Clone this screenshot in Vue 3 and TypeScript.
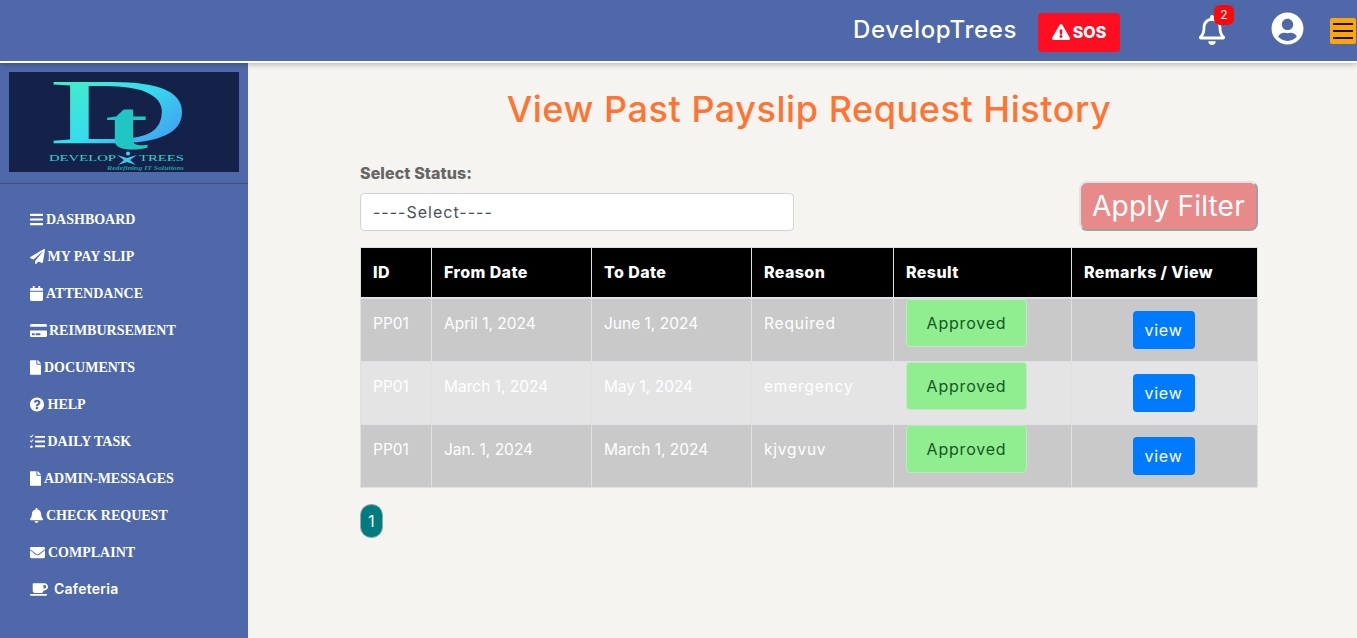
<template>
  <div class="app">
    <header class="topbar">
      <span class="brand">DevelopTrees</span>
      <button class="sos">
        <svg class="sos-icon" viewBox="0 0 576 512"><path :d="icons.warning" /></svg>
        <span>SOS</span>
      </button>
      <div class="bell">
        <svg viewBox="0 0 448 512"><path :d="icons.bellOutline" /></svg>
        <span class="badge">2</span>
      </div>
      <svg class="user" viewBox="0 0 496 512"><path :d="icons.user" /></svg>
      <button class="burger"><i></i><i></i><i></i></button>
    </header>

    <div class="body">
      <aside class="sidebar">
        <div class="logo-wrap">
          <svg class="logo" viewBox="0 0 230 100">
            <defs>
              <linearGradient id="dGrad" x1="0" y1="0" x2="1" y2="1">
                <stop offset="0" stop-color="#4cf5b4" />
                <stop offset="0.5" stop-color="#35dcee" />
                <stop offset="1" stop-color="#4a7ff2" />
              </linearGradient>
            </defs>
            <rect width="230" height="100" fill="#142148" />
            <text transform="translate(39,71) scale(2.09,1)" class="logo-d" fill="url(#dGrad)">D</text>
            <text transform="translate(96,77) scale(1.85,1)" class="logo-t">t</text>
            <text x="40" y="89" class="logo-name" textLength="67" lengthAdjust="spacingAndGlyphs">DEVELOP</text>
            <text x="130" y="89" class="logo-name" textLength="45" lengthAdjust="spacingAndGlyphs">TREES</text>
            <circle cx="119" cy="81.5" r="2" fill="#3fd6ec" />
            <path d="M108 83l10 3 10-3-7 5 6 5-9-3-9 3 6-5z" fill="#3fc8e8" />
            <text x="98" y="98" class="logo-tag" textLength="77" lengthAdjust="spacingAndGlyphs">Redefining IT Solutions</text>
          </svg>
        </div>
        <nav class="menu">
          <a v-for="item in menu" :key="item.label" class="menu-item" :class="{ alt: item.alt }">
            <svg :viewBox="item.box" :style="{ width: item.w + 'px' }"><path :d="item.path" /></svg>
            <span :style="{ marginLeft: item.gap + 'px' }">{{ item.label }}</span>
          </a>
        </nav>
      </aside>

      <main class="content">
        <h1 class="title">View Past Payslip Request History</h1>

        <div class="filter">
          <div class="field">
            <label class="field-label" for="status">Select Status:</label>
            <select id="status" class="select">
              <option>----Select----</option>
            </select>
          </div>
          <button class="apply">Apply Filter</button>
        </div>

        <table class="table">
          <colgroup>
            <col v-for="w in colWidths" :key="w" :style="{ width: w + 'px' }" />
          </colgroup>
          <thead>
            <tr>
              <th>ID</th>
              <th>From Date</th>
              <th>To Date</th>
              <th>Reason</th>
              <th>Result</th>
              <th>Remarks / View</th>
            </tr>
          </thead>
          <tbody>
            <tr v-for="row in rows" :key="row.from">
              <td>{{ row.id }}</td>
              <td>{{ row.from }}</td>
              <td>{{ row.to }}</td>
              <td class="reason">{{ row.reason }}</td>
              <td class="result"><div class="approved">Approved</div></td>
              <td class="action"><button class="view">view</button></td>
            </tr>
          </tbody>
        </table>

        <button class="page">1</button>
      </main>
    </div>
  </div>
</template>

<script setup lang="ts">
const icons = {
  warning:
    'M569.517 440.013C587.975 472.007 564.806 512 527.94 512H48.054c-36.937 0-59.999-40.055-41.577-71.987L246.423 24.035c18.467-32.009 64.72-31.951 83.154 0l239.94 416.013zM288 354c-25.405 0-46 20.595-46 46s20.595 46 46 46 46-20.595 46-46-20.595-46-46-46zm-43.673-165.346l7.418 136c.347 6.364 5.609 11.346 11.982 11.346h48.546c6.373 0 11.635-4.982 11.982-11.346l7.418-136c.375-6.874-5.098-12.654-11.982-12.654h-63.383c-6.884 0-12.356 5.78-11.981 12.654z',
  bellOutline:
    'M439.39 362.29c-19.32-20.76-55.47-51.99-55.47-154.29 0-77.7-54.48-139.9-127.94-155.16V32c0-17.67-14.32-32-31.98-32s-31.98 14.33-31.98 32v20.84C118.56 68.1 64.08 130.3 64.08 208c0 102.3-36.15 133.53-55.47 154.29-6 6.45-8.66 14.16-8.61 21.71.11 16.4 12.98 32 32.1 32h383.8c19.12 0 32-15.6 32.1-32 .05-7.55-2.61-15.27-8.61-21.71zM67.53 368c21.22-27.97 44.42-74.33 44.53-159.42 0-.2-.06-.38-.06-.58 0-61.86 50.14-112 112-112s112 50.14 112 112c0 .2-.06.38-.06.58.11 85.1 23.31 131.46 44.53 159.42H67.53zM224 512c35.32 0 63.97-28.65 63.97-64H160.03c0 35.35 28.65 64 63.97 64z',
  user:
    'M248 8C111 8 0 119 0 256s111 248 248 248 248-111 248-248S385 8 248 8zm0 96c48.6 0 88 39.4 88 88s-39.4 88-88 88-88-39.4-88-88 39.4-88 88-88zm0 344c-58.7 0-111.3-26.6-146.5-68.2 18.8-35.4 55.6-59.8 98.5-59.8 2.4 0 4.8.4 7.1 1.1 13 4.2 26.6 6.9 40.9 6.9 14.3 0 28-2.7 40.9-6.9 2.3-.7 4.7-1.1 7.1-1.1 42.9 0 79.7 24.4 98.5 59.8C359.3 421.4 306.7 448 248 448z'
}

const file =
  'M224 136V0H24C10.7 0 0 10.7 0 24v464c0 13.3 10.7 24 24 24h336c13.3 0 24-10.7 24-24V160H248c-13.2 0-24-10.8-24-24zm160-14.1v6.1H256V0h6.1c6.4 0 12.5 2.5 17 7l97.9 98c4.5 4.5 7 10.6 7 16.9z'

const menu = [
  {
    label: 'DASHBOARD',
    box: '0 0 448 512',
    w: 13,
    gap: 3,
    path: 'M16 132h416c8.837 0 16-7.163 16-16V76c0-8.837-7.163-16-16-16H16C7.163 60 0 67.163 0 76v40c0 8.837 7.163 16 16 16zm0 160h416c8.837 0 16-7.163 16-16v-40c0-8.837-7.163-16-16-16H16c-8.837 0-16 7.163-16 16v40c0 8.837 7.163 16 16 16zm0 160h416c8.837 0 16-7.163 16-16v-40c0-8.837-7.163-16-16-16H16c-8.837 0-16 7.163-16 16v40c0 8.837 7.163 16 16 16z'
  },
  {
    label: 'MY PAY SLIP',
    box: '0 0 512 512',
    w: 15,
    gap: 2.5,
    path: 'M476 3.2L12.5 270.6c-18.1 10.4-15.8 35.6 2.2 43.2L121 358.4l287.3-253.2c5.5-4.9 13.3 2.6 8.6 8.3L176 407v80.5c0 23.6 28.5 32.9 42.5 15.8L282 426l124.6 52.2c14.2 6 30.4-2.9 33-18.2l72-432C515 7.8 493.3-6.8 476 3.2z'
  },
  {
    label: 'ATTENDANCE',
    box: '0 0 448 512',
    w: 13,
    gap: 3,
    path: 'M12 192h424c6.6 0 12 5.4 12 12v260c0 26.5-21.5 48-48 48H48c-26.5 0-48-21.5-48-48V204c0-6.6 5.4-12 12-12zm436-44v-36c0-26.5-21.5-48-48-48h-48V12c0-6.6-5.4-12-12-12h-40c-6.6 0-12 5.4-12 12v52H160V12c0-6.6-5.4-12-12-12h-40c-6.6 0-12 5.4-12 12v52H48C21.5 64 0 85.5 0 112v36c0 6.6 5.4 12 12 12h424c6.6 0 12-5.4 12-12z'
  },
  {
    label: 'REIMBURSEMENT',
    box: '0 0 576 512',
    w: 17,
    gap: 2,
    path: 'M0 432c0 26.5 21.5 48 48 48h480c26.5 0 48-21.5 48-48V256H0v176zm192-68c0-6.6 5.4-12 12-12h136c6.6 0 12 5.4 12 12v40c0 6.6-5.4 12-12 12H204c-6.6 0-12-5.4-12-12v-40zm-128 0c0-6.6 5.4-12 12-12h72c6.6 0 12 5.4 12 12v40c0 6.6-5.4 12-12 12H76c-6.6 0-12-5.4-12-12v-40zM576 80v48H0V80c0-26.5 21.5-48 48-48h480c26.5 0 48 21.5 48 48z'
  },
  { label: 'DOCUMENTS', box: '0 0 384 512', w: 11, gap: 3, path: file },
  {
    label: 'HELP',
    box: '8 8 496 496',
    w: 14,
    gap: 3.5,
    path: 'M504 256c0 136.997-111.043 248-248 248S8 392.997 8 256C8 119.083 119.043 8 256 8s248 111.083 248 248zM262.655 90c-54.497 0-89.255 22.957-116.549 63.758-3.536 5.286-2.353 12.415 2.715 16.258l34.699 26.31c5.205 3.947 12.621 3.008 16.665-2.122 17.864-22.658 30.113-35.797 57.303-35.797 20.429 0 45.698 13.148 45.698 32.958 0 14.976-12.363 22.667-32.534 33.976C247.128 238.528 216 254.941 216 296v4c0 6.627 5.373 12 12 12h56c6.627 0 12-5.373 12-12v-1.333c0-28.462 83.186-29.647 83.186-106.667 0-58.002-60.165-102-116.531-102zM256 338c-25.365 0-46 20.635-46 46 0 25.364 20.635 46 46 46s46-20.636 46-46c0-25.365-20.635-46-46-46z'
  },
  {
    label: 'DAILY TASK',
    box: '0 0 512 512',
    w: 15,
    gap: 2.5,
    path: 'M20 50l25 25 55-60 25 22-80 90-48-48zM20 210l25 25 55-60 25 22-80 90-48-48zM48 392a44 44 0 1 0 .1 0zM176 64h336v64H176zM176 224h336v64H176zM176 384h336v64H176z'
  },
  { label: 'ADMIN-MESSAGES', box: '0 0 384 512', w: 11, gap: 3, path: file },
  {
    label: 'CHECK REQUEST',
    box: '0 0 448 512',
    w: 13,
    gap: 3,
    path: 'M224 512c35.32 0 63.97-28.65 63.97-64H160.03c0 35.35 28.65 64 63.97 64zm215.39-149.71c-19.32-20.76-55.47-51.99-55.47-154.29 0-77.7-54.48-139.9-127.94-155.16V32c0-17.67-14.32-32-31.98-32s-31.98 14.33-31.98 32v20.84C118.56 68.1 64.08 130.3 64.08 208c0 102.3-36.15 133.53-55.47 154.29-6 6.45-8.66 14.16-8.61 21.71.11 16.4 12.98 32 32.1 32h383.8c19.12 0 32-15.6 32.1-32 .05-7.55-2.61-15.27-8.61-21.71z'
  },
  {
    label: 'COMPLAINT',
    box: '0 0 512 512',
    w: 15,
    gap: 3,
    path: 'M502.3 190.8c3.9-3.1 9.7-.2 9.7 4.7V400c0 26.5-21.5 48-48 48H48c-26.5 0-48-21.5-48-48V195.6c0-5 5.7-7.8 9.7-4.7 22.4 17.4 52.1 39.5 154.1 113.6 21.1 15.4 56.7 47.8 92.2 47.6 35.7.3 72-32.8 92.3-47.6 102-74.1 131.6-96.3 154-113.7zM256 320c23.2.4 56.6-29.2 73.4-41.4 132.7-96.3 142.8-104.7 173.4-128.7 5.8-4.5 9.2-11.5 9.2-18.9v-19c0-26.5-21.5-48-48-48H48C21.5 64 0 85.5 0 112v19c0 7.4 3.4 14.3 9.2 18.9 30.6 23.9 40.7 32.4 173.4 128.7 16.8 12.2 50.2 41.8 73.4 41.4z'
  },
  {
    label: 'Cafeteria',
    box: '0 0 640 512',
    w: 18,
    gap: 6,
    alt: true,
    path: 'M192 384h192c53 0 96-43 96-96h32c70.6 0 128-57.4 128-128S582.6 32 512 32H120c-13.3 0-24 10.7-24 24v232c0 53 43 96 96 96zM512 96c35.3 0 64 28.7 64 64s-28.7 64-64 64h-32V96h32zm47.7 384H48.3c-47.6 0-61-64-36-64h583.3c25 0 11.8 64-35.9 64z'
  }
]

const colWidths = [71, 160, 160, 142, 178, 186]

const rows = [
  { id: 'PP01', from: 'April 1, 2024', to: 'June 1, 2024', reason: 'Required' },
  { id: 'PP01', from: 'March 1, 2024', to: 'May 1, 2024', reason: 'emergency' },
  { id: 'PP01', from: 'Jan. 1, 2024', to: 'March 1, 2024', reason: 'kjvgvuv' }
]
</script>

<style>
html,
body {
  margin: 0;
  background: #f5f4f0;
  overflow: hidden;
}
</style>

<style scoped>
.app {
  height: 638px;
  display: flex;
  flex-direction: column;
  overflow: hidden;
  font-family: Inter, 'Noto Sans', sans-serif;
  background: #f5f4f0;
}
.topbar {
  position: relative;
  z-index: 2;
  box-sizing: border-box;
  height: 63px;
  flex: none;
  display: flex;
  align-items: center;
  background: #4e68a9;
  border-bottom: 2px solid #fff;
  box-shadow: 0 1px 6px rgba(0, 0, 0, 0.3);
  padding-left: 853px;
}
.brand {
  width: 185px;
  margin-top: -3px;
  color: #fff;
  font-size: 24px;
  font-weight: 500;
  letter-spacing: 0.65px;
  white-space: nowrap;
}
.sos {
  width: 82px;
  height: 39px;
  margin-top: 3px;
  border: 0;
  border-radius: 4px;
  background: #ff0d20;
  color: #fff;
  font-family: inherit;
  font-size: 16px;
  font-weight: 800;
  display: flex;
  align-items: center;
  justify-content: center;
  gap: 3px;
  padding: 0;
}
.sos-icon {
  width: 18px;
  height: 16px;
  fill: #fff;
}
.bell {
  position: relative;
  width: 28px;
  height: 30px;
  margin-left: 78px;
  margin-top: -1px;
}
.bell svg {
  width: 28px;
  height: 30px;
  fill: #fff;
  display: block;
}
.badge {
  position: absolute;
  left: 16px;
  top: -10px;
  width: 20px;
  height: 20px;
  border-radius: 6px;
  background: #f90a0a;
  color: #fff;
  font-size: 12px;
  line-height: 20px;
  text-align: center;
}
.user {
  width: 33px;
  height: 33px;
  margin-left: 44.5px;
  margin-top: -4px;
  fill: #fff;
  flex: none;
}
.burger {
  width: 26px;
  height: 26px;
  margin-left: 26.5px;
  border: 0;
  border-radius: 2px;
  background: #ffa500;
  padding: 5px 3px;
  display: flex;
  flex-direction: column;
  justify-content: space-between;
  flex: none;
}
.burger i {
  display: block;
  height: 2px;
  background: #111;
}
.body {
  flex: 1;
  display: flex;
  min-height: 0;
}
.sidebar {
  width: 248px;
  flex: none;
  background: #4e68a9;
  color: #fff;
}
.logo-wrap {
  padding: 9px 9px 11px;
  border-bottom: 1px solid #3f5379;
}
.logo {
  display: block;
  width: 230px;
  height: 100px;
}
.logo-d {
  font-family: 'Liberation Serif', serif;
  font-size: 94px;
}
.logo-t {
  font-family: 'Liberation Serif', serif;
  font-size: 70px;
  font-weight: 700;
  fill: #1fc6c4;
}
.logo-name {
  font-family: 'Liberation Serif', serif;
  font-size: 9px;
  fill: #2fd8cf;
}
.logo-tag {
  font-family: 'Liberation Serif', serif;
  font-size: 5.5px;
  font-style: italic;
  font-weight: 700;
  fill: #1f9fa8;
}
.menu {
  padding: 17px 0 0 30px;
}
.menu-item {
  height: 37px;
  display: flex;
  align-items: center;
  font-family: 'Liberation Serif', serif;
  font-size: 14px;
  font-weight: 700;
  white-space: nowrap;
}
.menu-item svg {
  height: 15px;
  fill: #fff;
  flex: none;
}
.menu-item.alt span {
  font-family: Inter, sans-serif;
  font-size: 14px;
  font-weight: 600;
  letter-spacing: 0.25px;
  margin-top: -2px;
}
.content {
  flex: 1;
  min-width: 0;
  padding: 0 99px 0 112px;
}
.title {
  margin: 21px 0 0;
  height: 50px;
  color: #ff7433;
  font-size: 36px;
  font-weight: 500;
  letter-spacing: 0.55px;
  line-height: 50px;
  text-align: center;
  white-space: nowrap;
}
.filter {
  display: flex;
  justify-content: space-between;
  align-items: flex-end;
  margin-top: 27px;
}
.field {
  display: flex;
  flex-direction: column;
}
.field-label {
  color: #666;
  font-size: 16px;
  font-weight: 800;
  letter-spacing: 0.1px;
  line-height: 24px;
  margin-bottom: 8px;
}
.select {
  appearance: none;
  box-sizing: border-box;
  width: 434px;
  height: 38px;
  border: 1px solid #ced4da;
  border-radius: 4px;
  background: #fff;
  color: #495057;
  font-family: inherit;
  font-size: 16px;
  letter-spacing: 1px;
  padding: 0 12px;
}
.apply {
  box-sizing: border-box;
  width: 179px;
  height: 50px;
  border: 2px solid;
  border-color: #e2e2e2 #a0a0a0 #a0a0a0 #e2e2e2;
  border-radius: 8px;
  background: #e98a8a;
  color: #fff;
  font-family: inherit;
  font-size: 28px;
  font-weight: 400;
  letter-spacing: 0.2px;
  padding: 0;
  white-space: nowrap;
}
.table {
  table-layout: fixed;
  width: 897px;
  margin-top: 16px;
  border-collapse: collapse;
  font-size: 15.5px;
}
.table th,
.table td {
  border: 1px solid #dee2e6;
  text-align: left;
  padding: 12px;
  white-space: nowrap;
}
.table th {
  height: 25px;
  padding-top: 11px;
  padding-bottom: 13px;
  background: #000;
  color: #fff;
  font-size: 16px;
  font-weight: 800;
  letter-spacing: 0.4px;
  border-bottom-width: 2px;
}
.table td {
  height: 38px;
  color: #fff;
  vertical-align: top;
  padding-top: 15px;
  padding-bottom: 9px;
}
.table td.reason {
  letter-spacing: 0.8px;
}
.table tbody tr:nth-child(odd) td {
  background: #c9c9c9;
}
.table tbody tr:nth-child(even) td {
  background: #e4e4e5;
}
.table td.result {
  padding: 0 12px 2px;
}
.table td.action {
  vertical-align: middle;
  text-align: center;
  padding: 0;
}
.approved {
  box-sizing: border-box;
  width: 121px;
  height: 48px;
  border: 1px solid #c3e6cb;
  border-radius: 4px;
  background: #90ee90;
  color: #155724;
  font-size: 16px;
  letter-spacing: 0.8px;
  line-height: 47px;
  text-align: center;
}
.view {
  width: 62px;
  height: 38px;
  margin-right: 2px;
  border: 0;
  border-radius: 4px;
  background: #007bff;
  color: #fff;
  font-family: inherit;
  font-size: 16px;
  letter-spacing: 0.8px;
  padding: 0;
}
.page {
  display: block;
  box-sizing: border-box;
  width: 23px;
  height: 34px;
  margin-top: 16px;
  border: 1px solid #9aa;
  border-radius: 11px;
  background: #007c80;
  color: #fff;
  font-family: inherit;
  font-size: 15.5px;
  padding: 0;
}
</style>
